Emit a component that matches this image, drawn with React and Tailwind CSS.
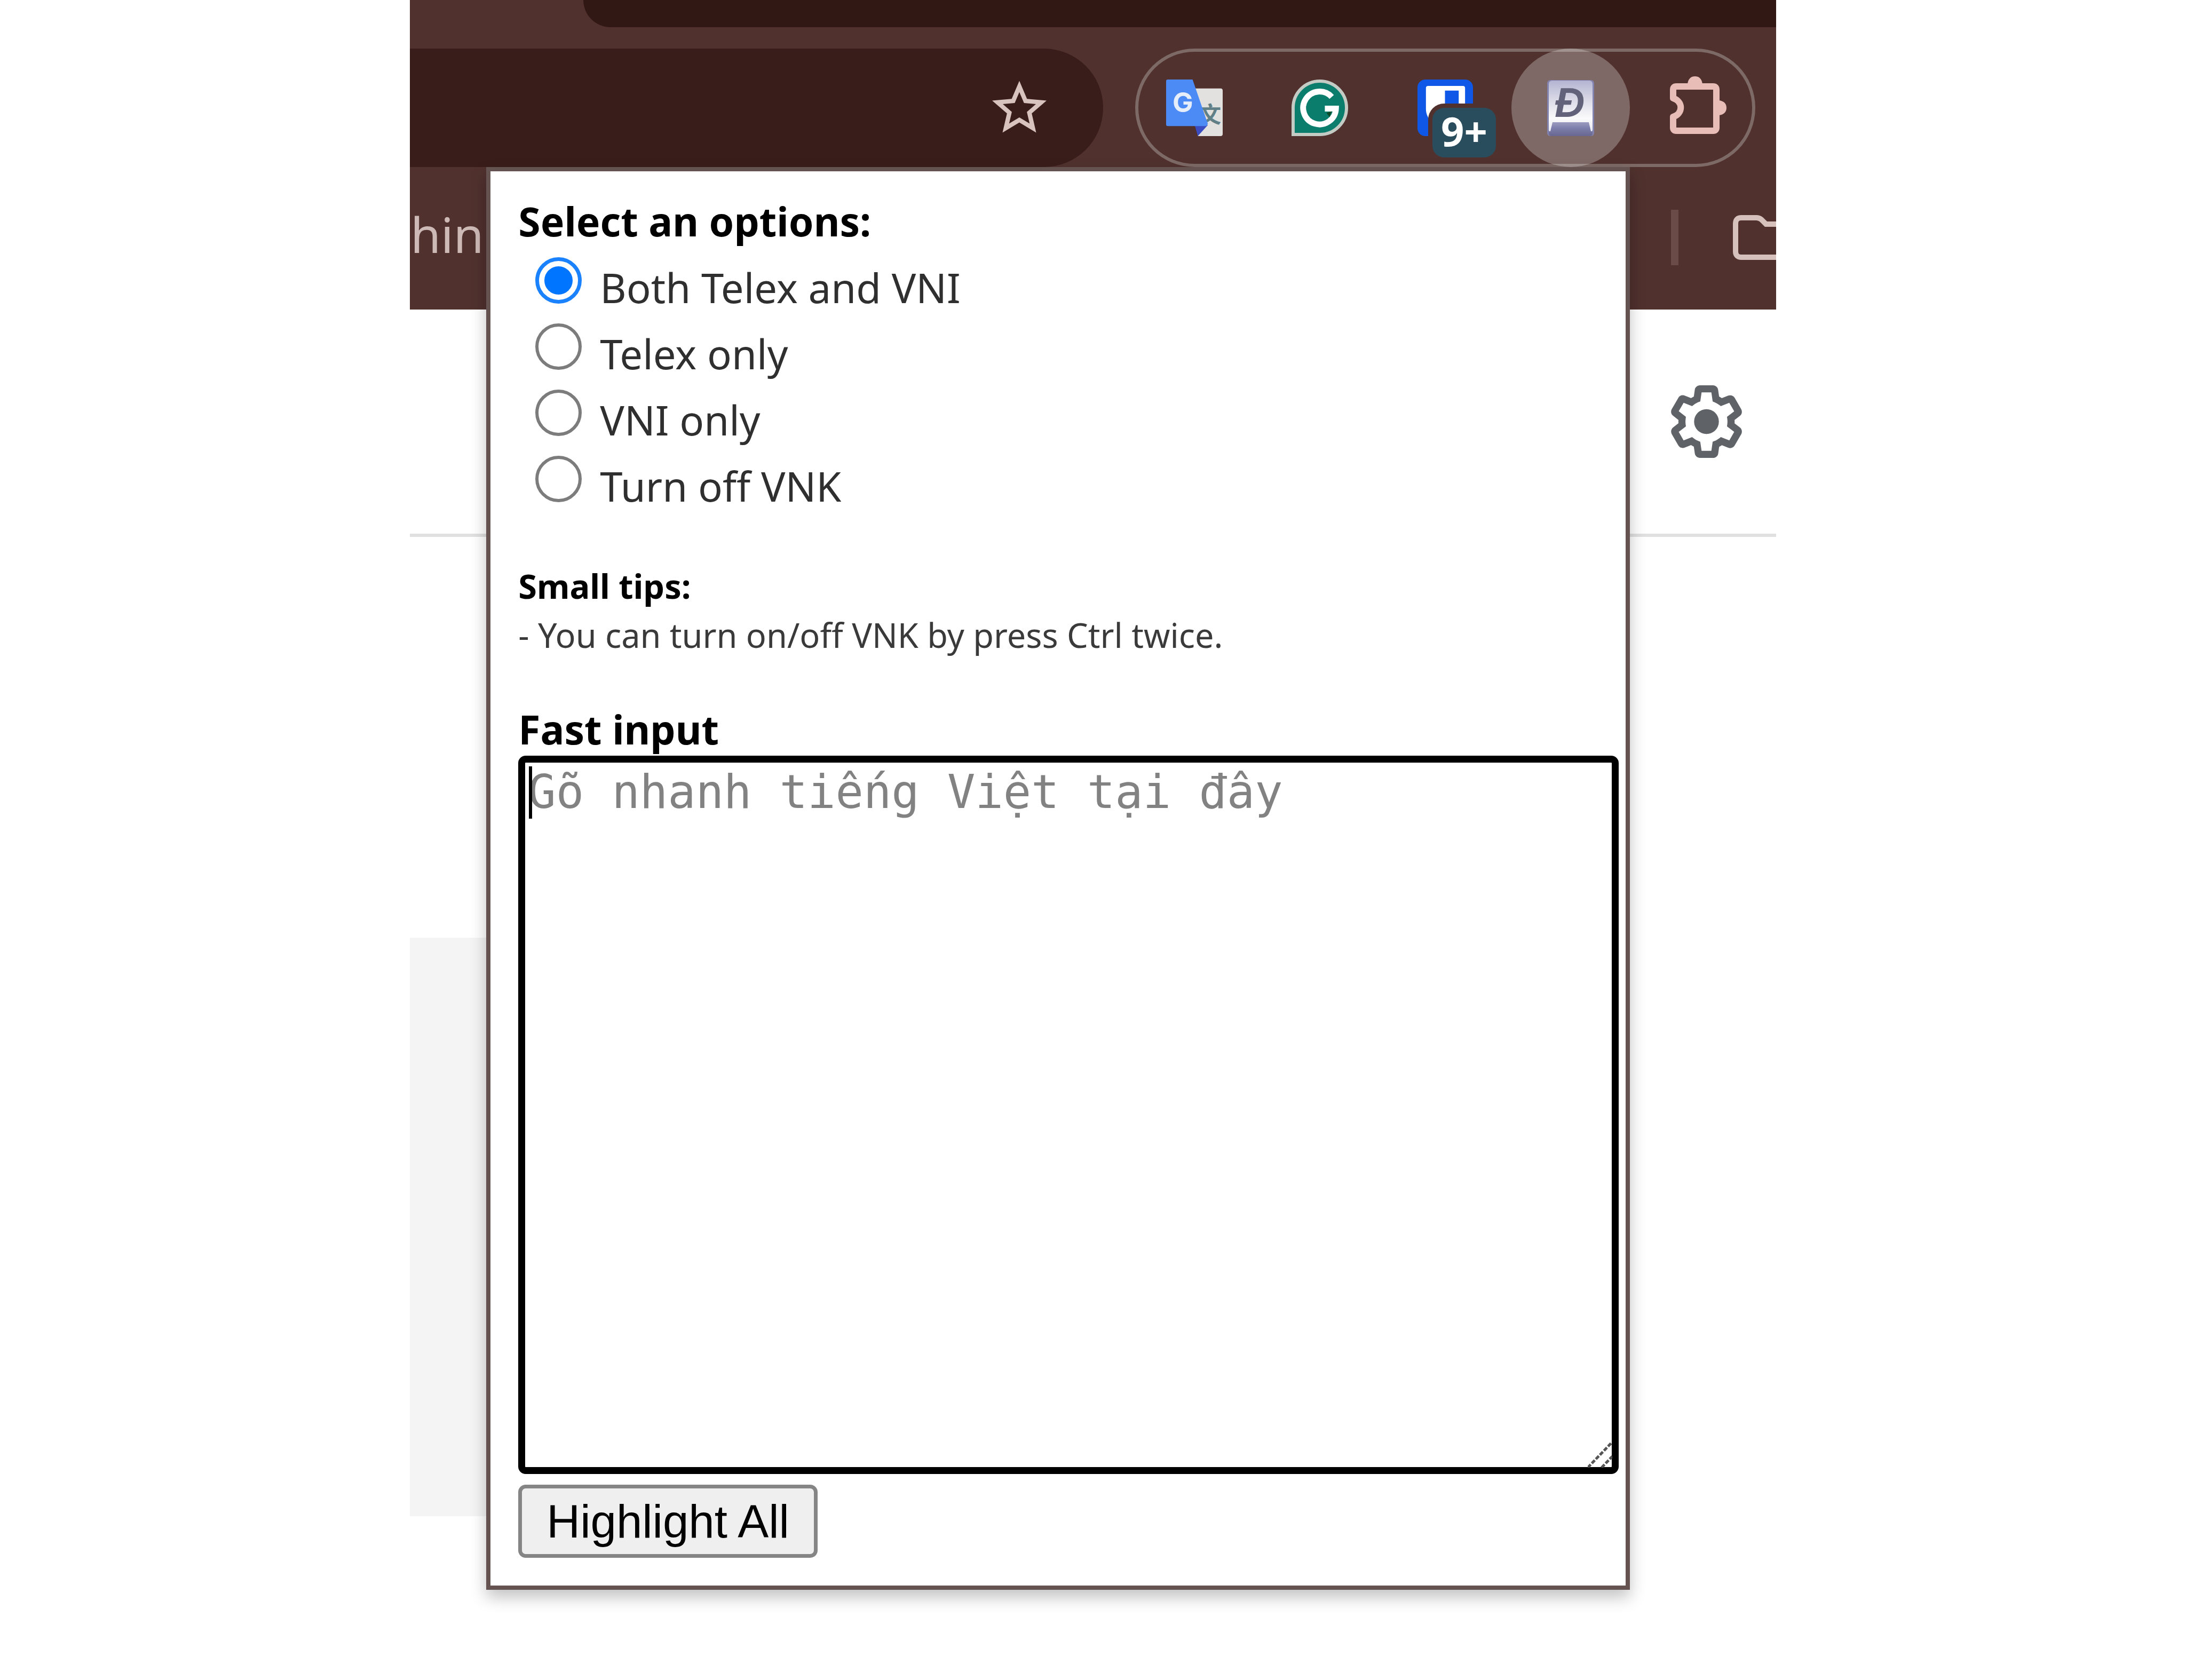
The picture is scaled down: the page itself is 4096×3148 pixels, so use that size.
import React from "react";

const OPTIONS = ["Both Telex and VNI", "Telex only", "VNI only", "Turn off VNK"];

function StarIcon() {
  return (
    <svg viewBox="2 2 20 19" className="h-[98px] w-[102px] fill-[#d9c3bf]" aria-hidden="true">
      <path d="M22 9.24l-7.19-.62L12 2 9.19 8.63 2 9.24l5.46 4.73L5.82 21 12 17.27 18.18 21l-1.63-7.03L22 9.24zM12 15.4l-3.76 2.27 1-4.28-3.32-2.88 4.38-.38L12 6.1l1.71 4.04 4.38.38-3.32 2.88 1 4.28L12 15.4z" />
    </svg>
  );
}

function TranslateIcon() {
  return (
    <svg viewBox="0 0 107 107" className="size-[106px]" aria-hidden="true">
      <path d="M50 17H103Q107 17 107 21V103Q107 107 103 107H60Z" fill="#e2e1e0" />
      <text x="62" y="82" fontSize="42" fontWeight="700" fontFamily="Noto Sans CJK SC, sans-serif" fill="#607f86">
        文
      </text>
      <path d="M54 86H79L60 107Z" fill="#3a4cc0" />
      <path d="M3 0H50L79 84L76 88H3Q0 88 0 85V3Q0 0 3 0Z" fill="#4c8bf5" />
      <text x="12" y="62" fontSize="52" fontWeight="700" fontFamily="Inter, sans-serif" fill="#e6eefc">
        G
      </text>
    </svg>
  );
}

function GrammarIcon() {
  return (
    <svg viewBox="0 0 107 107" className="size-[106px]" aria-hidden="true">
      <path d="M3 104V53.500A50.500 50.500 0 1 1 53.500 104Z" fill="#0b7d6c" stroke="#c3cbc4" strokeWidth="6" />
      <path d="M76 33A31 31 0 1 0 84 55H63" fill="none" stroke="#fff" strokeWidth="11" />
      <path d="M66 63L76 60L72 71Z" fill="#0b4a26" />
    </svg>
  );
}

function VaultIcon() {
  return (
    <svg viewBox="0 0 105 107" className="h-[106px] w-[104px]" aria-hidden="true">
      <rect width="105" height="107" rx="15" fill="#0f57e6" />
      <path d="M20 12H86Q90 12 90 16V56C90 76 72 88 53 98C34 88 16 76 16 56V16Q16 12 20 12Z" fill="#fff" />
      <path d="M52 21H78V56C78 68 64 78 52 84Z" fill="#0f57e6" />
    </svg>
  );
}

function TypingIcon() {
  return (
    <svg viewBox="0 0 88 105" className="h-[105px] w-[88px]" aria-hidden="true">
      <defs>
        <linearGradient id="key-face" x1="0" y1="0" x2="0" y2="1">
          <stop offset="0" stopColor="#b4b4d2" />
          <stop offset="0.3" stopColor="#d3d3e3" />
          <stop offset="0.72" stopColor="#fbfbfc" />
          <stop offset="1" stopColor="#e4e4ee" />
        </linearGradient>
        <linearGradient id="key-base" x1="0" y1="0" x2="0" y2="1">
          <stop offset="0" stopColor="#9c9cc0" />
          <stop offset="0.4" stopColor="#7f7fae" />
          <stop offset="1" stopColor="#67678f" />
        </linearGradient>
      </defs>
      <rect width="88" height="105" rx="6" fill="#8383b0" />
      <rect x="3" y="1" width="82" height="98" rx="6" fill="url(#key-face)" />
      <path d="M10 79H78L82 96H85V100Q85 105 80 105H8Q3 105 3 100V96H6Z" fill="url(#key-base)" />
      <text x="14" y="69" fontSize="78" fontWeight="700" fontStyle="italic" fontFamily="Liberation Sans, sans-serif" fill="#62627a">
        Đ
      </text>
    </svg>
  );
}

function PuzzleIcon() {
  return (
    <svg viewBox="0 -2 107 121" className="-mt-1 ml-[9px] h-[121px] w-[107px]" aria-hidden="true">
      <path
        d="M6 42V26Q6 20 12 20H81Q87 20 87 26V97Q87 103 81 103H12Q6 103 6 97V77C25 71 25 48 6 42Z"
        fill="none"
        stroke="#e8bdb7"
        strokeWidth="12"
        strokeLinejoin="round"
      />
      <path d="M0 50C10 54 10 65 0 69Z" fill="#50312e" />
      <path d="M33 16C34 5 40 1 47 1S60 5 61 16ZM91 46C102 47 106 53 106 60S102 73 91 74Z" fill="#e8bdb7" />
    </svg>
  );
}

function FolderIcon() {
  return (
    <svg viewBox="0 0 120 84" className="h-[84px] w-[120px]" aria-hidden="true">
      <path
        d="M16 5H44Q50 5 54 9L62 17H104Q115 17 115 28V68Q115 79 104 79H16Q5 79 5 68V16Q5 5 16 5Z"
        fill="none"
        stroke="#d6c1bd"
        strokeWidth="10"
      />
    </svg>
  );
}

function GearIcon() {
  return (
    <svg viewBox="2 1.750 20 20.500" className="h-[136px] w-[133px] fill-[#5f6368]" aria-hidden="true">
      <path d="M13.850 22.250h-3.700c-.74 0-1.360-.54-1.450-1.270l-.27-1.890c-.27-.14-.53-.29-.79-.46l-1.800.72c-.7.26-1.470-.03-1.810-.65L2.200 15.530c-.35-.66-.2-1.440.36-1.880l1.530-1.190c-.01-.15-.02-.3-.02-.46 0-.15.01-.31.02-.46l-1.520-1.190c-.59-.45-.74-1.260-.37-1.880l1.850-3.190c.34-.62 1.110-.9 1.790-.63l1.810.73c.26-.17.52-.32.78-.46l.27-1.910c.09-.7.71-1.250 1.440-1.250h3.700c.74 0 1.360.54 1.450 1.270l.27 1.890c.27.14.53.29.79.46l1.800-.72c.71-.26 1.480.03 1.820.65l1.840 3.180c.36.66.2 1.440-.36 1.880l-1.520 1.190c.01.15.02.3.02.46s-.01.31-.02.46l1.520 1.190c.56.45.72 1.230.37 1.860l-1.860 3.220c-.34.62-1.110.9-1.800.63l-1.800-.72c-.26.17-.52.32-.78.46l-.27 1.910c-.1.68-.72 1.220-1.460 1.220zm-3.230-2h2.760l.37-2.550.53-.22c.44-.18.88-.44 1.340-.78l.45-.34 2.380.96 1.380-2.400-2.030-1.580.07-.56c.03-.26.06-.51.06-.78s-.03-.53-.06-.78l-.07-.56 2.030-1.580-1.390-2.400-2.390.96-.45-.35c-.42-.32-.87-.58-1.330-.77l-.52-.22-.37-2.550h-2.760l-.37 2.550-.53.21c-.44.19-.88.44-1.340.79l-.45.33-2.380-.95-1.390 2.390 2.030 1.580-.07.56a7 7 0 0 0-.06.79c0 .26.02.53.06.78l.07.56-2.030 1.580 1.380 2.400 2.390-.96.45.35c.43.33.86.58 1.330.77l.53.22.38 2.550z" />
      <circle cx="12" cy="12" r="3.5" />
    </svg>
  );
}

function ToolbarButton({ label, active, children }) {
  return (
    <button
      type="button"
      aria-label={label}
      className={
        active
          ? "flex size-[222px] items-center justify-center rounded-full bg-white/27"
          : "flex size-[222px] items-center justify-center rounded-full"
      }
    >
      {children}
    </button>
  );
}

function BrowserHeader() {
  return (
    <header className="overflow-hidden bg-[#50312e]">
      <div className="ml-[325px] h-[51px] rounded-bl-[56px] bg-[#311814]" />
      <div className="mt-10 flex items-center gap-[60px] pr-[39px]">
        <div className="flex h-[222px] flex-1 items-center justify-end rounded-r-full bg-[#391d1a] pr-[106px] pb-1">
          <button type="button" aria-label="Bookmark this tab">
            <StarIcon />
          </button>
        </div>
        <div className="flex gap-[13px] rounded-full inset-ring-[6px] inset-ring-[#7d6965]">
          <ToolbarButton label="Translate">
            <TranslateIcon />
          </ToolbarButton>
          <ToolbarButton label="Grammar check">
            <GrammarIcon />
          </ToolbarButton>
          <ToolbarButton label="Passwords">
            <span className="relative">
              <VaultIcon />
              <span className="absolute top-[53px] left-[28px] flex h-[93px] w-[119px] items-center justify-center rounded-[22px] bg-[#2a4d5d] pb-2 font-['Noto_Sans',sans-serif] text-[76px] leading-none font-bold text-white ring-8 ring-[#50312e]">
                9+
              </span>
            </span>
          </ToolbarButton>
          <ToolbarButton label="Vietnamese typing" active>
            <TypingIcon />
          </ToolbarButton>
          <ToolbarButton label="Extensions">
            <PuzzleIcon />
          </ToolbarButton>
        </div>
      </div>
      <nav className="flex h-[267px] items-start justify-between pt-[76px]" aria-label="Bookmarks">
        <a href="#thin" className="-ml-8 font-['Noto_Sans',sans-serif] text-[92px] leading-[100px] text-[#cdb9b6]">
          thin
        </a>
        <div className="-mr-[39px] flex items-center gap-[102px] pt-1">
          <span className="h-[104px] w-[14px] bg-[#6b4b48]" />
          <a href="#folder" aria-label="Bookmark folder">
            <FolderIcon />
          </a>
        </div>
      </nav>
    </header>
  );
}

function OptionRow({ label, checked }) {
  return (
    <label className="flex h-[124px] items-start gap-[34px] pl-8">
      <input
        type="radio"
        name="typing-mode"
        defaultChecked={checked}
        className="mt-[6px] size-[87px] shrink-0 appearance-none rounded-full border-[6px] border-[#7c7c7c] bg-white checked:border-[7px] checked:border-[#1a82ff] checked:bg-[#0075ff] checked:bg-clip-content checked:p-[10px]"
      />
      <span className="text-[76px] leading-[126px] text-[#2f2f2f]">{label}</span>
    </label>
  );
}

function Popup() {
  return (
    <section className="absolute top-[313px] right-[10.7%] left-[5.6%] border-8 border-[#645350] bg-white pt-[43px] pr-[13px] pb-[52px] pl-[52px] font-['Noto_Sans',sans-serif] text-black shadow-[0_14px_28px_rgba(0,0,0,0.24)]">
      <fieldset>
        <legend className="mb-3 text-[75px] leading-[100px] font-bold">Select an options:</legend>
        {OPTIONS.map((label, i) => (
          <OptionRow key={label} label={label} checked={i === 0} />
        ))}
      </fieldset>
      <h2 className="mt-20 text-[63px] leading-[92px] font-bold">Small tips:</h2>
      <p className="text-[63px] leading-[92px] text-[#3a3a3a]">- You can turn on/off VNK by press Ctrl twice.</p>
      <label htmlFor="fast-input" className="mt-20 block text-[75px] leading-[100px] font-bold">
        Fast input
      </label>
      <div className="relative">
        <textarea
          id="fast-input"
          placeholder="Gõ nhanh tiếng Việt tại đây"
          className="block h-[1346px] w-full resize-none rounded-[14px] border-[13px] border-black bg-white px-[5px] py-1 font-['DejaVu_Sans_Mono',monospace] text-[87px] leading-[102px] text-black outline-none placeholder:text-[#828282]"
        />
        <span className="absolute top-[20px] left-[20px] h-[98px] w-[6px] bg-black" />
        <svg viewBox="0 0 46 48" className="absolute right-[12px] bottom-[12px] h-[48px] w-[46px]" aria-hidden="true">
          <path d="M0 48L46 0M26 48L46 27" stroke="#555" strokeWidth="5" strokeDasharray="8 3" />
        </svg>
      </div>
      <button
        type="button"
        className="mt-5 block h-[137px] rounded-[14px] border-[7px] border-[#858585] bg-[#efefef] px-[46px] font-['Liberation_Sans',sans-serif] text-[87px] leading-[100px]"
      >
        Highlight All
      </button>
    </section>
  );
}

export default function App() {
  return (
    <div className="flex min-h-screen justify-center bg-white">
      <main className="relative w-[62.5%]">
        <BrowserHeader />
        <div className="flex h-[426px] items-center justify-end border-b-[6px] border-[#e0e0e0] pr-16">
          <button type="button" aria-label="Settings">
            <GearIcon />
          </button>
        </div>
        <div className="mt-[751px] h-[1084px] w-[12%] bg-[#f4f4f4]" />
        <Popup />
      </main>
    </div>
  );
}
